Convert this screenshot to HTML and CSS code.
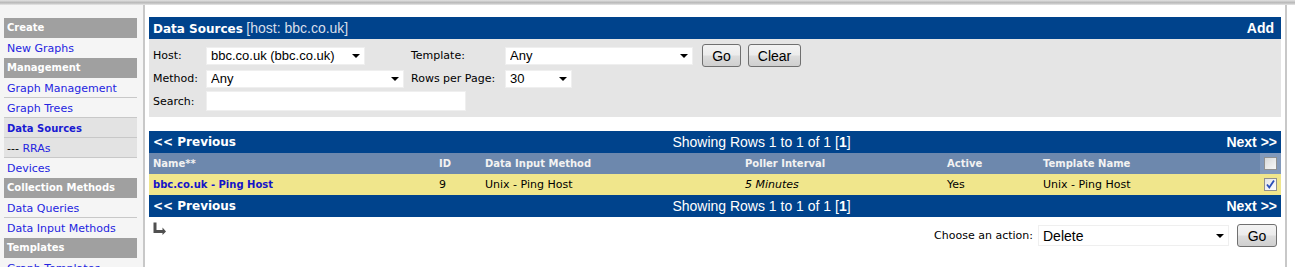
FILE: index.html
```html
<!DOCTYPE html>
<html lang="en">
<head>
    <meta charset="UTF-8">
    <title>Data Sources</title>
    <link rel="stylesheet" href="styles.css">
</head>
<body>
    <div class="top-shadow"></div>
    <div class="layout">
        <div class="sidebar">
            <div class="menu-header">Create</div>
            <a class="menu-item last" href="#">New Graphs</a>
            <div class="menu-header">Management</div>
            <a class="menu-item" href="#">Graph Management</a>
            <a class="menu-item" href="#">Graph Trees</a>
            <a class="menu-item selected" href="#"><b>Data Sources</b></a>
            <div class="menu-item selected">--- <a href="#">RRAs</a></div>
            <a class="menu-item last" href="#">Devices</a>
            <div class="menu-header">Collection Methods</div>
            <a class="menu-item" href="#">Data Queries</a>
            <a class="menu-item last" href="#">Data Input Methods</a>
            <div class="menu-header">Templates</div>
            <a class="menu-item" href="#">Graph Templates</a>
        </div>

        <div class="content">
            <div class="panel-title">
                <span><b>Data Sources</b> <span class="host">[host: bbc.co.uk]</span></span>
                <a class="add" href="#">Add</a>
            </div>

            <div class="filter">
                <span>Host:</span>
                <span class="select"><select class="w-host"><option>bbc.co.uk (bbc.co.uk)</option></select></span>
                <span>Template:</span>
                <span class="filter-end">
                    <span class="select"><select class="w-template"><option>Any</option></select></span>
                    <button class="btn btn-go">Go</button>
                    <button class="btn btn-clear">Clear</button>
                </span>

                <span>Method:</span>
                <span class="select"><select class="w-method"><option>Any</option></select></span>
                <span>Rows per Page:</span>
                <span class="select"><select class="w-rows"><option>30</option></select></span>

                <span>Search:</span>
                <input class="search" type="text">
            </div>

            <div class="nav">
                <span class="prev">&lt;&lt; Previous</span>
                <span class="showing">Showing Rows 1 to 1 of 1 [<b>1</b>]</span>
                <span class="next">Next &gt;&gt;</span>
            </div>

            <table class="list">
                <colgroup>
                    <col style="width: 286px">
                    <col style="width: 46px">
                    <col style="width: 260px">
                    <col style="width: 202px">
                    <col style="width: 96px">
                    <col style="width: 221px">
                    <col style="width: 21px">
                </colgroup>
                <tr>
                    <th>Name**</th>
                    <th>ID</th>
                    <th>Data Input Method</th>
                    <th>Poller Interval</th>
                    <th>Active</th>
                    <th>Template Name</th>
                    <th class="check-cell"><span class="chk"></span></th>
                </tr>
                <tr>
                    <td><a class="row-link" href="#">bbc.co.uk - Ping Host</a></td>
                    <td>9</td>
                    <td>Unix - Ping Host</td>
                    <td><i>5 Minutes</i></td>
                    <td>Yes</td>
                    <td>Unix - Ping Host</td>
                    <td><span class="chk on"><svg width="11" height="11" viewBox="0 0 11 11"><path d="M2 5.5 L4.3 8.5 L9 1.5" fill="none" stroke="#2a4fb8" stroke-width="1.8"/></svg></span></td>
                </tr>
            </table>

            <div class="nav">
                <span class="prev">&lt;&lt; Previous</span>
                <span class="showing">Showing Rows 1 to 1 of 1 [<b>1</b>]</span>
                <span class="next">Next &gt;&gt;</span>
            </div>

            <div class="actions-row">
                <svg class="arrow" width="14" height="13" viewBox="0 0 14 13">
                    <path d="M0.5 0.5 H3.5 V8 H9.5 V5.5 L13 9.5 L9.5 13 V11 H0.5 Z" fill="#505050"/>
                </svg>
                <div class="action">
                    <span>Choose an action:</span>
                    <span class="select"><select class="w-action"><option>Delete</option></select></span>
                    <button class="btn btn-action">Go</button>
                </div>
            </div>
        </div>
    </div>
</body>
</html>
```

FILE: styles.css
```css
body {
    margin: 0;
    font-family: "DejaVu Sans", Verdana, sans-serif;
    font-size: 11px;
    color: #000;
    background: #fff;
}
.top-shadow {
    height: 5px;
    background: linear-gradient(#e2e2e2, #b8b8b8 55%, #e8e8e8);
}
.layout {
    display: flex;
    height: 262px;
    overflow: hidden;
}

/* left menu */
.sidebar {
    width: 133px;
    padding: 13px 6px 0 4px;
    background: #f5f5f5;
    border-right: 2px solid #c8c8c8;
}
.menu-header {
    height: 20px;
    line-height: 20px;
    padding-left: 3px;
    background: #a0a0a0;
    color: #fff;
    font-size: 10px;
    font-weight: bold;
}
.menu-item {
    display: block;
    height: 19px;
    line-height: 21px;
    padding-left: 3px;
    border-bottom: 1px solid #c8c8c8;
    color: #2424e0;
    text-decoration: none;
}
.menu-item.last {
    border-bottom: none;
    height: 20px;
}
.menu-item a {
    color: #2424e0;
    text-decoration: none;
}
.menu-item b {
    font-size: 10px;
    color: #1a1ad2;
}
div.menu-item {
    color: #000;
}
.menu-item.selected {
    background: #e3e3e3;
}

/* main area */
.content {
    width: 1132px;
    padding: 12px 4px 0 4px;
    border-right: 2px solid #c8c8c8;
}
.panel-title {
    display: flex;
    justify-content: space-between;
    align-items: center;
    height: 22px;
    padding: 0 7px 0 4px;
    background: #00438c;
    color: #fff;
}
.panel-title b {
    font-size: 12px;
}
.host {
    font-family: "Liberation Sans", Arial, sans-serif;
    font-size: 14px;
    color: #d9dfea;
}
.add {
    font-family: "Liberation Sans", Arial, sans-serif;
    font-size: 14px;
    font-weight: bold;
    color: #fff;
    text-decoration: none;
}

.filter {
    display: grid;
    grid-template-columns: 53px 205px 94px auto;
    grid-template-rows: 23px 21px 22px;
    row-gap: 1px;
    align-items: center;
    justify-items: start;
    padding: 5px 4px;
    background: #e5e5e5;
}
.filter-end {
    display: flex;
    align-items: center;
}
.select {
    position: relative;
    display: inline-block;
    vertical-align: middle;
}
.select::after {
    content: "";
    position: absolute;
    right: 5px;
    top: 50%;
    margin-top: -2px;
    border-left: 4px solid transparent;
    border-right: 4px solid transparent;
    border-top: 4px solid #000;
}
.select select {
    -webkit-appearance: none;
    appearance: none;
    display: block;
    height: 18px;
    margin: 0;
    padding: 0 0 0 4px;
    border: 1px solid #efefef;
    border-radius: 0;
    background: #fff;
    color: #000;
    font-family: "Liberation Sans", Arial, sans-serif;
    font-size: 13px;
}
.w-host { width: 159px; }
.w-template { width: 188px; }
.w-method { width: 198px; }
.w-rows { width: 67px; }
.select .w-action {
    width: 191px;
    height: 21px;
    font-size: 14px;
}
.search {
    grid-column: 2 / 4;
    width: 260px;
    height: 20px;
    margin: 0;
    padding: 0;
    border: 1px solid #efefef;
    box-sizing: border-box;
    background: #fff;
}

.btn {
    height: 23px;
    padding: 0;
    border: 1px solid #707070;
    border-radius: 3px;
    background: linear-gradient(#f3f3f3, #ececec 48%, #dddddd 52%, #cfcfcf);
    color: #000;
    font-family: "Liberation Sans", Arial, sans-serif;
    font-size: 14px;
}
.btn-go { width: 39px; margin-left: 9px; }
.btn-clear { width: 53px; margin-left: 7px; }
.btn-action { width: 40px; margin-left: 8px; }

/* pager bars */
.nav {
    display: grid;
    grid-template-columns: 296px 1fr 203px;
    align-items: center;
    height: 22px;
    padding: 0 4px;
    background: #00438c;
    color: #fff;
}
.content > .filter + .nav {
    margin-top: 14px;
}
.prev {
    font-size: 12px;
    font-weight: bold;
}
.showing {
    text-align: center;
    font-family: "Liberation Sans", Arial, sans-serif;
    font-size: 14px;
}
.next {
    text-align: right;
    font-family: "Liberation Sans", Arial, sans-serif;
    font-size: 14px;
    font-weight: bold;
}

/* results table */
.list {
    width: 100%;
    table-layout: fixed;
    border-collapse: collapse;
}
.list th,
.list td {
    height: 21px;
    padding: 0 4px;
    text-align: left;
    white-space: nowrap;
}
.list th {
    background: #6d88ad;
    color: #f2f2f2;
    font-size: 10px;
    font-weight: bold;
}
.list th.check-cell {
    background: #8299bb;
}
.list td {
    background: #f0e68c;
}
.row-link {
    color: #1414c8;
    font-size: 10px;
    font-weight: bold;
    text-decoration: none;
}
.chk {
    display: block;
    width: 11px;
    height: 11px;
    border: 1px solid #909090;
    background: linear-gradient(135deg, #d8d8d8, #f8f8f8);
}
.chk.on {
    background: linear-gradient(135deg, #e4e4e4, #ffffff);
}
.chk svg {
    display: block;
}

.actions-row {
    display: flex;
    justify-content: space-between;
    align-items: flex-start;
    padding: 5px 4px 0 4px;
}
.arrow {
    display: block;
}
.action {
    display: flex;
    align-items: center;
    margin-top: 2px;
}
.action span:first-child {
    margin-right: 5px;
}
```
